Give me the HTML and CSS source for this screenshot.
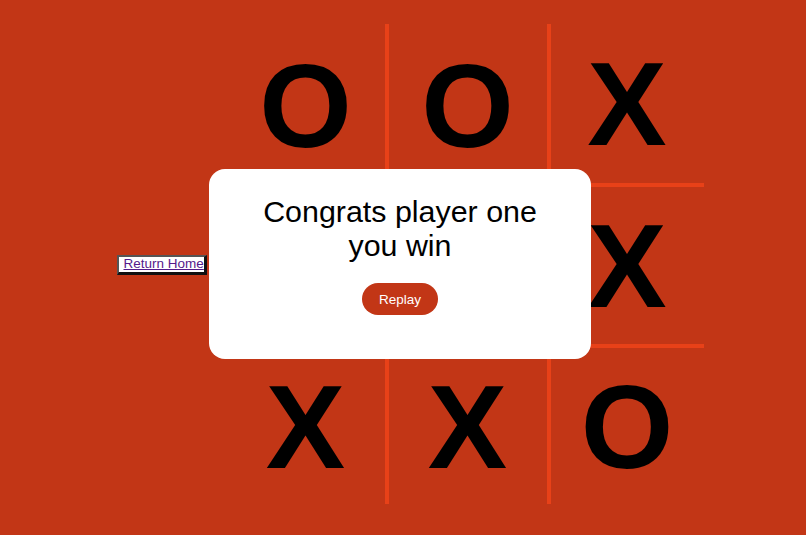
FILE: index.html
```html
<!DOCTYPE html>
<html>
<head>
<meta charset="utf-8">
<link rel="stylesheet" href="styles.css">
</head>
<body>
  <main class="page">
    <button class="home-btn"><a href="#" class="home-link">Return Home</a></button>
    <div class="board">
      <div class="cell c1 r1">O</div>
      <div class="cell c2 r1">O</div>
      <div class="cell c3 r1">X</div>
      <div class="cell c1 r2">X</div>
      <div class="cell c2 r2">O</div>
      <div class="cell c3 r2">X</div>
      <div class="cell c1 r3">X</div>
      <div class="cell c2 r3">X</div>
      <div class="cell c3 r3">O</div>
    </div>
  </main>
  <div class="modal">
    <h2 class="modal-title">Congrats player one you win</h2>
    <button class="replay-btn">Replay</button>
  </div>
</body>
</html>
```

FILE: styles.css
```css
html, body {
  margin: 0;
  padding: 0;
}
body {
  background: #c23616;
  font-family: "Liberation Sans", Arial, sans-serif;
  height: 100vh;
  overflow: hidden;
}
.page {
  height: 100vh;
  display: flex;
  align-items: center;
  justify-content: center;
  gap: 20px;
}
.home-btn {
  margin-left: 14px;
  margin-bottom: 6px;
  background: #fff;
  border-style: solid;
  border-width: 2px 3px 3px 2px;
  border-color: #555 #111 #111 #555;
  padding: 0 1px 0 5px;
  height: 20px;
  width: 90px;
  font-family: "Liberation Sans", Arial, sans-serif;
  font-size: 13.5px;
  line-height: 14px;
  display: flex;
  align-items: center;
  white-space: nowrap;
}
.home-link {
  color: #551a8b;
  text-decoration: underline;
}
.board {
  margin-bottom: 7px;
  display: grid;
  grid-template-columns: 162px 162px 153px;
  grid-template-rows: 163px 161px 156px;
}
.cell {
  display: flex;
  align-items: center;
  justify-content: center;
  font-family: "Liberation Sans", Arial, sans-serif;
  font-weight: bold;
  font-size: 119px;
  color: #000;
  line-height: 1;
}
.c1, .c2 {
  border-right: 4px solid #e84118;
}
.c3.r1, .c3.r2 {
  border-bottom: 4px solid #e84118;
}
.modal {
  position: fixed;
  left: 209px;
  top: 169px;
  width: 382px;
  height: 190px;
  box-sizing: border-box;
  background: #fff;
  border-radius: 16px;
  padding-top: 25px;
  text-align: center;
}
.modal-title {
  margin: 0 auto;
  width: 300px;
  font-family: "Liberation Sans", Arial, sans-serif;
  font-weight: normal;
  font-size: 30.4px;
  line-height: 34px;
  color: #000;
}
.replay-btn {
  margin-top: 21px;
  background: #c23616;
  color: #fff;
  border: none;
  border-radius: 16px;
  width: 76px;
  height: 32px;
  padding: 0;
  font-family: "Liberation Sans", Arial, sans-serif;
  font-size: 13.5px;
}
```
